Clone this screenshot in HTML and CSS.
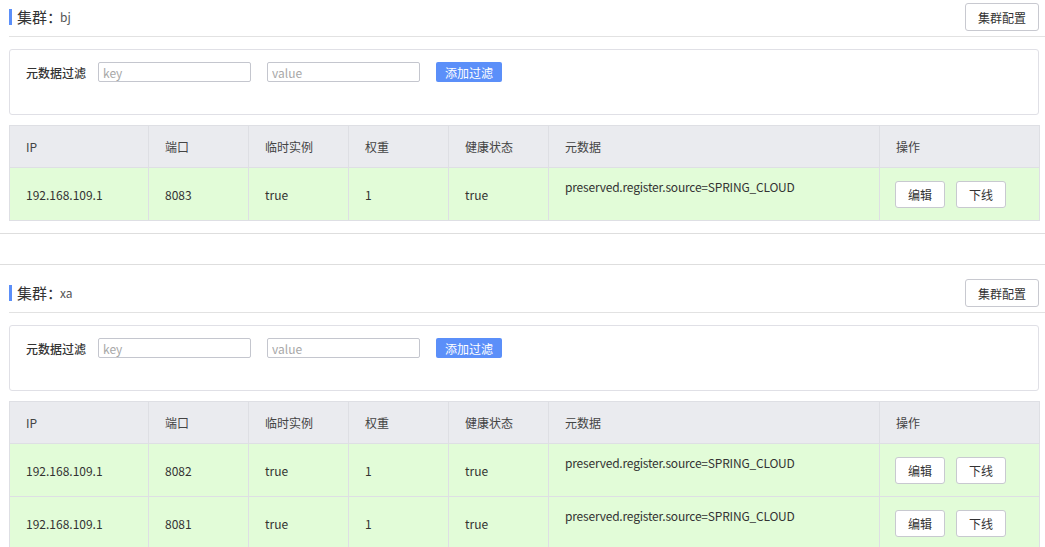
FILE: index.html
```html
<!DOCTYPE html>
<html lang="zh-CN">
<head>
<meta charset="utf-8">
<title>集群</title>
<link rel="stylesheet" href="styles.css">
</head>
<body>
<section class="cluster first">
  <div class="cluster-head">
    <h3 class="cluster-title"><span class="bar"></span>集群：<span class="cluster-name">bj</span></h3>
    <button class="btn">集群配置</button>
  </div>
  <div class="filter-box">
    <div class="filter-row">
      <span class="filter-label">元数据过滤</span>
      <input class="input" placeholder="key">
      <input class="input" placeholder="value">
      <button class="btn-primary">添加过滤</button>
    </div>
  </div>
  <table class="grid">
    <colgroup>
      <col class="c-ip"><col class="c-n"><col class="c-n"><col class="c-n"><col class="c-n"><col class="c-meta"><col class="c-op">
    </colgroup>
    <thead>
      <tr><th>IP</th><th>端口</th><th>临时实例</th><th>权重</th><th>健康状态</th><th>元数据</th><th>操作</th></tr>
    </thead>
    <tbody>
      <tr><td>192.168.109.1</td><td>8083</td><td>true</td><td>1</td><td>true</td><td class="meta">preserved.register.source=SPRING_CLOUD</td><td class="ops"><button class="btn small">编辑</button><button class="btn small">下线</button></td></tr>
    </tbody>
  </table>
</section>
<section class="cluster">
  <div class="cluster-head">
    <h3 class="cluster-title"><span class="bar"></span>集群：<span class="cluster-name">xa</span></h3>
    <button class="btn">集群配置</button>
  </div>
  <div class="filter-box">
    <div class="filter-row">
      <span class="filter-label">元数据过滤</span>
      <input class="input" placeholder="key">
      <input class="input" placeholder="value">
      <button class="btn-primary">添加过滤</button>
    </div>
  </div>
  <table class="grid">
    <colgroup>
      <col class="c-ip"><col class="c-n"><col class="c-n"><col class="c-n"><col class="c-n"><col class="c-meta"><col class="c-op">
    </colgroup>
    <thead>
      <tr><th>IP</th><th>端口</th><th>临时实例</th><th>权重</th><th>健康状态</th><th>元数据</th><th>操作</th></tr>
    </thead>
    <tbody>
      <tr><td>192.168.109.1</td><td>8082</td><td>true</td><td>1</td><td>true</td><td class="meta">preserved.register.source=SPRING_CLOUD</td><td class="ops"><button class="btn small">编辑</button><button class="btn small">下线</button></td></tr>
      <tr><td>192.168.109.1</td><td>8081</td><td>true</td><td>1</td><td>true</td><td class="meta">preserved.register.source=SPRING_CLOUD</td><td class="ops"><button class="btn small">编辑</button><button class="btn small">下线</button></td></tr>
    </tbody>
  </table>
</section>
</body>
</html>
```
FILE: styles.css
```css
html, body {
  margin: 0;
  padding: 0;
  background: #fff;
  overflow: hidden;
}
body {
  font-family: "Noto Sans CJK SC", "Noto Sans", sans-serif;
  font-size: 12px;
  color: #333;
}
.cluster {
  border-top: 1px solid #dedede;
  border-bottom: 1px solid #dedede;
  padding: 14px 0 12px 9px;
  margin-bottom: 30px;
}
.cluster.first {
  margin-top: -12px;
}
.cluster-head {
  display: flex;
  justify-content: space-between;
  align-items: center;
  padding: 0 6px 5px 0;
  border-bottom: 1px solid #e2e2e2;
}
.cluster-title {
  margin: 0;
  display: flex;
  align-items: center;
  font-size: 15px;
  font-weight: normal;
  color: #333;
  line-height: 20px;
}
.bar {
  display: inline-block;
  width: 3px;
  height: 16px;
  background: #5b8ff9;
  margin-right: 5px;
}
.cluster-name {
  font-size: 12px;
  color: #555;
  margin-left: -2px;
}
.btn {
  font-family: inherit;
  font-size: 12px;
  color: #333;
  background: #fff;
  border: 1px solid #c8c9d0;
  border-radius: 3px;
  height: 28px;
  width: 74px;
  padding: 0;
  cursor: pointer;
}
.btn.small {
  width: 50px;
  height: 27px;
}
.btn.small + .btn.small {
  margin-left: 11px;
}
.filter-box {
  margin: 12px 6px 0 0;
  border: 1px solid #e0e0e6;
  border-radius: 3px;
  height: 64px;
  box-sizing: content-box;
}
.filter-row {
  display: flex;
  align-items: center;
  padding: 12px 0 0 16px;
}
.filter-label {
  width: 60px;
  margin-right: 12px;
  color: #333;
  font-weight: 500;
}
.input {
  width: 153px;
  height: 20px;
  box-sizing: border-box;
  border: 1px solid #c4c6ce;
  border-radius: 2px;
  padding: 0 4px;
  font-family: inherit;
  font-size: 12px;
  margin-right: 16px;
  outline: none;
}
.input::placeholder {
  color: #a8a8a8;
}
.btn-primary {
  width: 66px;
  height: 20px;
  padding: 0;
  border: none;
  border-radius: 2px;
  background: #5b8ff9;
  color: #fff;
  font-family: inherit;
  font-size: 12px;
}
.grid {
  margin-top: 10px;
  width: 1030px;
  border-collapse: collapse;
  table-layout: fixed;
}
.c-ip { width: 139px; }
.c-n { width: 100px; }
.c-meta { width: 331px; }
.c-op { width: 160px; }
.grid th, .grid td {
  border: 1px solid #dedfe4;
  text-align: left;
  padding: 0 16px;
  font-size: 12px;
}
.grid th {
  height: 41px;
  background: #eaebef;
  color: #444;
  font-weight: normal;
}
.grid td {
  height: 52px;
  background: #e2fcd8;
  color: #333;
}
.grid td.meta {
  vertical-align: top;
  height: 42px;
  padding-top: 10px;
  letter-spacing: -0.2px;
}
.grid td.ops {
  padding-left: 15px;
}
```
